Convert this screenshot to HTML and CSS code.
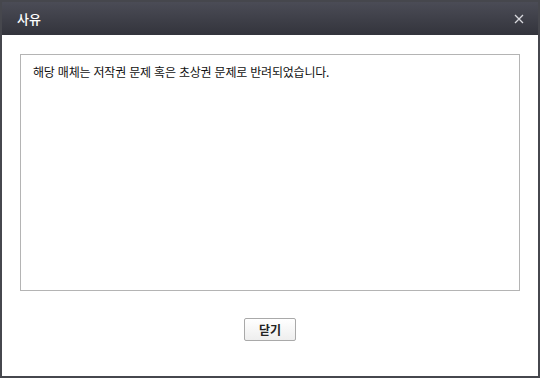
FILE: index.html
```html
<!DOCTYPE html>
<html lang="ko">
<head>
  <meta charset="UTF-8" />
  <title>사유</title>
  <link rel="stylesheet" href="styles.css">
</head>
<body>

  <div class="dialog">
    <div class="dialog-header">
      <h1>사유</h1>
      <button class="btn-close" type="button" aria-label="닫기">
        <svg width="10" height="10" viewBox="0 0 10 10">
          <path d="M1 1 L9 9 M9 1 L1 9" stroke="#d8d9de" stroke-width="1.3" fill="none"/>
        </svg>
      </button>
    </div>

    <div class="dialog-body">
      <div class="reason-box">
        해당 매체는 저작권 문제 혹은 초상권 문제로 반려되었습니다.
      </div>
      <div class="dialog-actions">
        <button class="btn" type="button">닫기</button>
      </div>
    </div>
  </div>

</body>
</html>
```

FILE: styles.css
```css
* {
  margin: 0;
  padding: 0;
  box-sizing: border-box;
  font-family: 'Noto Sans CJK KR', 'Noto Sans', sans-serif;
}

body {
  background: #ffffff;
}

.dialog {
  width: 540px;
  height: 378px;
  border: 2px solid #46474d;
  background: #ffffff;
  display: flex;
  flex-direction: column;
}

.dialog-header {
  height: 33px;
  background: linear-gradient(to bottom, #4b4c56, #33343c);
  display: flex;
  align-items: center;
  justify-content: space-between;
  padding: 0 12px 0 15px;
}

.dialog-header h1 {
  color: #ffffff;
  font-size: 13px;
  font-weight: 500;
}

.btn-close {
  background: none;
  border: none;
  width: 14px;
  height: 14px;
  display: flex;
  align-items: center;
  justify-content: center;
  cursor: pointer;
}

.dialog-body {
  flex: 1;
  padding: 19px 18px 0 18px;
}

.reason-box {
  height: 237px;
  border: 1px solid #b4b4b4;
  padding: 8px 12px;
  font-size: 12px;
  letter-spacing: -0.2px;
  color: #111111;
}

.dialog-actions {
  display: flex;
  justify-content: center;
  margin-top: 27px;
}

.btn {
  width: 52px;
  height: 23px;
  border: 1px solid #a9a9a9;
  border-radius: 2px;
  background: linear-gradient(to bottom, #ffffff, #eeeeee);
  font-size: 12px;
  font-weight: 700;
  color: #222222;
  cursor: pointer;
}
```
